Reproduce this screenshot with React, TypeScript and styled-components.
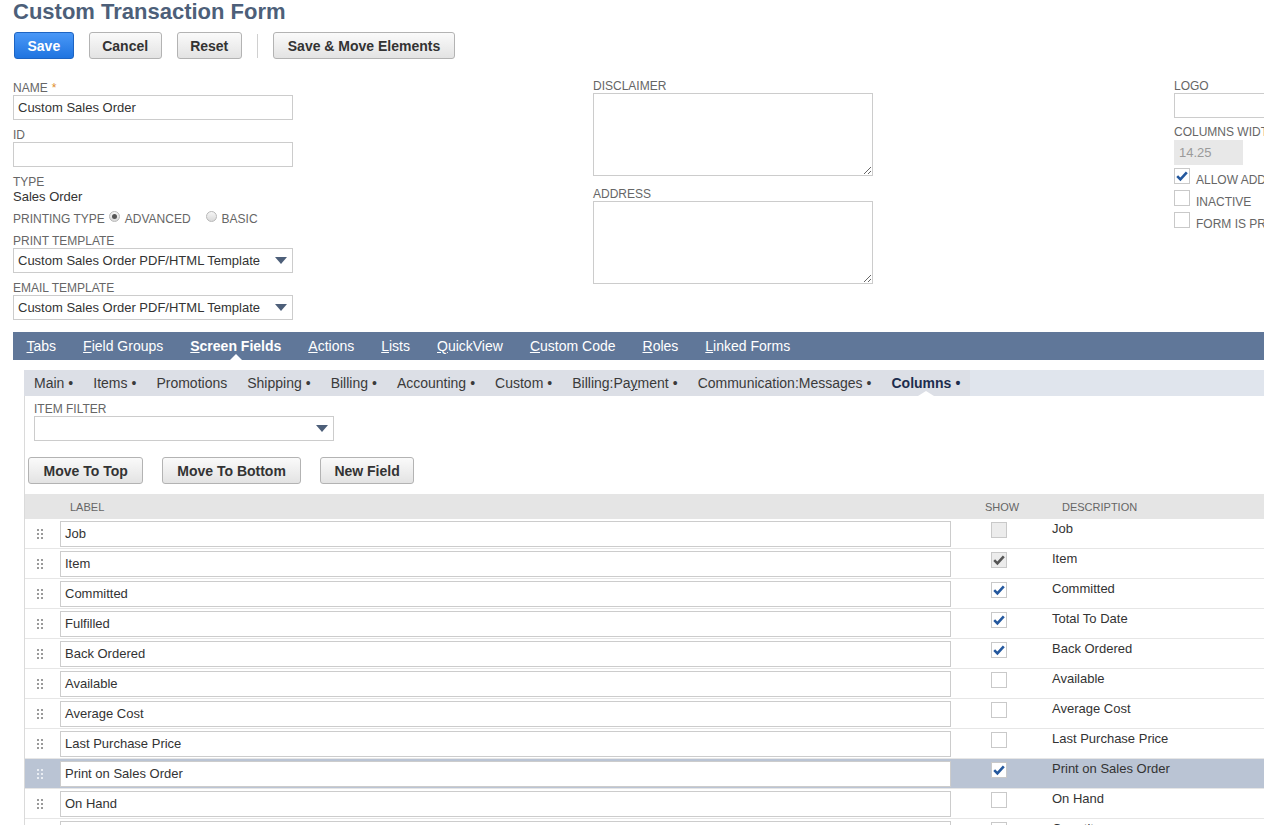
import React from 'react';
import styled, { createGlobalStyle, css } from 'styled-components';

const Global = createGlobalStyle`
  html, body { margin: 0; padding: 0; overflow: hidden; background: #fff; }
  body { font-family: "Liberation Sans", Arial, sans-serif; color: #333; }
  * { box-sizing: border-box; }
`;

const Page = styled.div`
  width: 1264px;
  height: 825px;
  overflow: hidden;
  padding-left: 13px;
`;

const Title = styled.h1`
  margin: 0;
  font-size: 22px;
  line-height: 24px;
  font-weight: bold;
  color: #4d5f79;
`;

const Toolbar = styled.div`
  display: flex;
  align-items: center;
  gap: 15px;
  margin-top: 8px;
  padding-left: 1px;
`;

const Button = styled.button<{ $primary?: boolean; $pad?: number }>`
  height: 27px;
  padding: 0 ${(p) => p.$pad ?? 12.5}px;
  border: 1px solid #b3b3b3;
  border-radius: 3px;
  background: linear-gradient(#fafafa, #e3e3e3);
  font-family: "Liberation Sans", Arial, sans-serif;
  font-weight: bold;
  font-size: 14px;
  color: #333;
  white-space: nowrap;
  ${(p) =>
    p.$primary &&
    css`
      background: linear-gradient(#4a98f7, #1f74e0);
      border-color: #1d64c2;
      color: #fff;
    `}
`;

const Separator = styled.span`
  width: 1px;
  height: 24px;
  background: #d0d0d0;
`;

const FormGrid = styled.div`
  display: grid;
  grid-template-columns: 580px 581px 1fr;
  margin-top: 19px;
`;

const Column = styled.div<{ $top?: number }>`
  display: flex;
  flex-direction: column;
  padding-top: ${(p) => p.$top ?? 0}px;
  min-width: 0;
`;

const Field = styled.div<{ $gap?: number }>`
  margin-bottom: ${(p) => p.$gap ?? 7}px;
`;

const Label = styled.div`
  font-size: 12px;
  line-height: 16px;
  height: 15px;
  color: #666;
  text-transform: uppercase;
  white-space: nowrap;
`;

const Required = styled.span`
  color: #e0902e;
  margin-left: 4px;
`;

const TextInput = styled.div<{ $w?: number; $disabled?: boolean; $mt?: number }>`
  width: ${(p) => p.$w ?? 280}px;
  height: 25px;
  margin-top: ${(p) => p.$mt ?? 0}px;
  border: 1px solid #cccccc;
  padding: 0 4px;
  font-size: 13px;
  line-height: 23px;
  color: #333;
  background: #fff;
  white-space: nowrap;
  ${(p) =>
    p.$disabled &&
    css`
      background: #e8e8e8;
      border-color: #e8e8e8;
      color: #9a9a9a;
    `}
`;

const Value = styled.div`
  font-size: 13px;
  line-height: 15px;
  color: #333;
`;

const RadioRow = styled.div`
  display: flex;
  align-items: center;
  height: 14px;
  font-size: 12px;
  color: #666;
  text-transform: uppercase;
  white-space: nowrap;
`;

const Radio = styled.span<{ $checked?: boolean }>`
  width: 11px;
  height: 11px;
  border-radius: 50%;
  border: 1px solid #b8b8b8;
  background: linear-gradient(#f6f6f6, #d9d9d9);
  margin: 0 5px 6px 4px;
  display: inline-flex;
  align-items: center;
  justify-content: center;
  &::after {
    content: '';
    width: 5px;
    height: 5px;
    border-radius: 50%;
    background: ${(p) => (p.$checked ? '#555' : 'transparent')};
  }
`;

const RadioText = styled.span<{ $gap?: number }>`
  margin-right: ${(p) => p.$gap ?? 0}px;
`;

const Select = styled.div<{ $w?: number }>`
  width: ${(p) => p.$w ?? 280}px;
  height: 25px;
  border: 1px solid #cccccc;
  display: flex;
  align-items: center;
  justify-content: space-between;
  padding: 0 5px 0 4px;
  font-size: 13px;
  color: #333;
  background: #fff;
  white-space: nowrap;
`;

const Caret = styled.span`
  width: 0;
  height: 0;
  border-left: 6px solid transparent;
  border-right: 6px solid transparent;
  border-top: 7px solid #4d5f79;
`;

const TextArea = styled.textarea`
  display: block;
  width: 280px;
  height: 83px;
  margin: 0;
  border: 1px solid #cccccc;
  resize: both;
  font-family: "Liberation Sans", Arial, sans-serif;
  font-size: 13px;
  outline: none;
`;

const CheckRow = styled.div`
  display: flex;
  align-items: flex-start;
  height: 22px;
  gap: 6px;
`;

const CheckLabel = styled.span`
  font-size: 12px;
  line-height: 14px;
  padding-top: 5px;
  color: #666;
  text-transform: uppercase;
  white-space: nowrap;
`;

const Box = styled.span<{ $disabled?: boolean }>`
  width: 16px;
  height: 16px;
  flex: none;
  border: 1px solid #c9c9c9;
  background: ${(p) => (p.$disabled ? '#ececec' : '#fff')};
  display: inline-flex;
  align-items: center;
  justify-content: center;
`;

const CheckBox: React.FC<{ checked?: boolean; disabled?: boolean }> = ({ checked, disabled }) => (
  <Box $disabled={disabled}>
    {checked && (
      <svg width="14" height="14" viewBox="0 0 14 14">
        <path
          d="M2.2 7.2 L5.4 10.4 L11.8 3.4"
          fill="none"
          stroke={disabled ? '#555' : '#24589e'}
          strokeWidth="2.6"
        />
      </svg>
    )}
  </Box>
);

const TabBar = styled.nav`
  margin-top: 12px;
  height: 28px;
  background: #607799;
  display: flex;
`;

const Tab = styled.div<{ $active?: boolean }>`
  position: relative;
  padding: 0 13.5px;
  line-height: 28px;
  font-size: 14px;
  color: #fff;
  white-space: nowrap;
  font-weight: ${(p) => (p.$active ? 'bold' : 'normal')};
  ${(p) =>
    p.$active &&
    css`
      &::after {
        content: '';
        position: absolute;
        left: 50%;
        bottom: 0;
        margin-left: -6px;
        border-left: 6px solid transparent;
        border-right: 6px solid transparent;
        border-bottom: 6px solid #fff;
      }
    `}
`;

const Key = styled.u`
  text-decoration: underline;
`;

const Section = styled.div`
  margin-top: 10px;
  margin-left: 11px;
`;

const SubBar = styled.div`
  height: 26px;
  background: #e0e5ed;
  display: flex;
`;

const SubTabs = styled.div`
  display: flex;
  background: #dcdfe6;
`;

const SubTab = styled.div<{ $active?: boolean }>`
  position: relative;
  padding: 0 10px;
  line-height: 26px;
  font-size: 14px;
  white-space: nowrap;
  color: ${(p) => (p.$active ? '#1d2d4e' : '#3a3a3a')};
  font-weight: ${(p) => (p.$active ? 'bold' : 'normal')};
  ${(p) =>
    p.$active &&
    css`
      &::after {
        content: '';
        position: absolute;
        left: 50%;
        bottom: 0;
        margin-left: -8px;
        border-left: 8px solid transparent;
        border-right: 8px solid transparent;
        border-bottom: 5px solid #fff;
      }
    `}
`;

const Dot = styled.span`
  margin-left: 4px;
`;

const Panel = styled.div`
  border-left: 1px solid #dadada;
  padding-top: 5px;
  height: 600px;
`;

const FilterBlock = styled.div`
  padding-left: 9px;
`;

const ButtonsRow = styled.div`
  display: flex;
  gap: 19px;
  margin-top: 16px;
  padding-left: 3px;
`;

const Table = styled.div`
  margin-top: 10px;
`;

const gridCols = '35px 891px 40px 16px 45px 1fr';

const HeadRow = styled.div`
  display: grid;
  grid-template-columns: ${gridCols};
  height: 25px;
  align-items: center;
  background: #e5e5e5;
  font-size: 11px;
  color: #666;
  text-transform: uppercase;
`;

const HeadCell = styled.div<{ $pad?: number; $span?: string }>`
  padding-left: ${(p) => p.$pad ?? 0}px;
  grid-column: ${(p) => p.$span ?? 'auto'};
  white-space: nowrap;
`;

const Row = styled.div<{ $selected?: boolean }>`
  display: grid;
  grid-template-columns: ${gridCols};
  height: 30px;
  align-items: start;
  border-bottom: 1px solid #e6e6e6;
  background: ${(p) => (p.$selected ? '#bac4d4' : '#fff')};
`;

const HandleCell = styled.div`
  align-self: center;
  padding-left: 12px;
  display: flex;
`;

const LabelInput = styled.div`
  margin-top: 2px;
  height: 26px;
  border: 1px solid #cccccc;
  background: #fff;
  padding-left: 4px;
  font-size: 13px;
  line-height: 24px;
  color: #333;
  white-space: nowrap;
`;

const ShowCell = styled.div`
  grid-column: 4;
  margin-top: 3px;
  display: flex;
`;

const Desc = styled.div`
  grid-column: 6;
  margin-top: 2px;
  font-size: 13px;
  line-height: 16px;
  color: #333;
  white-space: nowrap;
`;

const Handle: React.FC<{ light?: boolean }> = ({ light }) => (
  <svg width="6" height="10" viewBox="0 0 6 10">
    {[0, 4, 8].map((y) =>
      [0, 4].map((x) => (
        <rect key={`${x}-${y}`} x={x} y={y} width="2" height="2" fill={light ? '#e9edf3' : '#9a9a9a'} />
      ))
    )}
  </svg>
);

type RowData = { label: string; desc: string; checked?: boolean; disabled?: boolean; selected?: boolean };

const rows: RowData[] = [
  { label: 'Job', desc: 'Job', disabled: true },
  { label: 'Item', desc: 'Item', disabled: true, checked: true },
  { label: 'Committed', desc: 'Committed', checked: true },
  { label: 'Fulfilled', desc: 'Total To Date', checked: true },
  { label: 'Back Ordered', desc: 'Back Ordered', checked: true },
  { label: 'Available', desc: 'Available' },
  { label: 'Average Cost', desc: 'Average Cost' },
  { label: 'Last Purchase Price', desc: 'Last Purchase Price' },
  { label: 'Print on Sales Order', desc: 'Print on Sales Order', checked: true, selected: true },
  { label: 'On Hand', desc: 'On Hand' },
  { label: 'Quantity', desc: 'Quantity' },
];

const tabs: { key: string; post: string; active?: boolean }[] = [
  { key: 'T', post: 'abs' },
  { key: 'F', post: 'ield Groups' },
  { key: 'S', post: 'creen Fields', active: true },
  { key: 'A', post: 'ctions' },
  { key: 'L', post: 'ists' },
  { key: 'Q', post: 'uickView' },
  { key: 'C', post: 'ustom Code' },
  { key: 'R', post: 'oles' },
  { key: 'L', post: 'inked Forms' },
];

const subTabs: { pre: string; key?: string; post?: string; dot: boolean; active?: boolean }[] = [
  { pre: 'Main', dot: true },
  { pre: 'Items', dot: true },
  { pre: 'Promotions', dot: false },
  { pre: 'Shippin', key: 'g', post: '', dot: true },
  { pre: 'Billing', dot: true },
  { pre: 'Accounting', dot: true },
  { pre: 'Custom', dot: true },
  { pre: 'Billing:Pa', key: 'y', post: 'ment', dot: true },
  { pre: 'Communication:Messages', dot: true },
  { pre: 'Columns', dot: true, active: true },
];

export default function App() {
  return (
    <Page>
      <Global />
      <Title>Custom Transaction Form</Title>
      <Toolbar>
        <Button $primary>Save</Button>
        <Button>Cancel</Button>
        <Button>Reset</Button>
        <Separator />
        <Button $pad={14}>Save &amp; Move Elements</Button>
      </Toolbar>

      <FormGrid>
        <Column $top={2}>
          <Field>
            <Label>
              Name<Required>*</Required>
            </Label>
            <TextInput>Custom Sales Order</TextInput>
          </Field>
          <Field>
            <Label>ID</Label>
            <TextInput />
          </Field>
          <Field $gap={8}>
            <Label>Type</Label>
            <Value>Sales Order</Value>
          </Field>
          <Field>
            <RadioRow>
              <span>Printing Type</span>
              <Radio $checked />
              <RadioText $gap={11}>Advanced</RadioText>
              <Radio />
              <RadioText>Basic</RadioText>
            </RadioRow>
          </Field>
          <Field>
            <Label>Print Template</Label>
            <Select>
              <span>Custom Sales Order PDF/HTML Template</span>
              <Caret />
            </Select>
          </Field>
          <Field $gap={0}>
            <Label>Email Template</Label>
            <Select>
              <span>Custom Sales Order PDF/HTML Template</span>
              <Caret />
            </Select>
          </Field>
        </Column>

        <Column>
          <Field $gap={10}>
            <Label>Disclaimer</Label>
            <TextArea />
          </Field>
          <Field $gap={0}>
            <Label>Address</Label>
            <TextArea />
          </Field>
        </Column>

        <Column>
          <Field $gap={6}>
            <Label>Logo</Label>
            <TextInput $w={300} />
          </Field>
          <Field $gap={3}>
            <Label>Columns Width</Label>
            <TextInput $w={69} $disabled $mt={1}>
              14.25
            </TextInput>
          </Field>
          <CheckRow>
            <CheckBox checked />
            <CheckLabel>Allow Add Items</CheckLabel>
          </CheckRow>
          <CheckRow>
            <CheckBox />
            <CheckLabel>Inactive</CheckLabel>
          </CheckRow>
          <CheckRow>
            <CheckBox />
            <CheckLabel>Form Is Preferred</CheckLabel>
          </CheckRow>
        </Column>
      </FormGrid>

      <TabBar>
        {tabs.map((t, i) => (
          <Tab key={i} $active={t.active}>
            <Key>{t.key}</Key>
            {t.post}
          </Tab>
        ))}
      </TabBar>

      <Section>
        <SubBar>
          <SubTabs>
            {subTabs.map((s, i) => (
              <SubTab key={i} $active={s.active}>
                {s.pre}
                {s.key && <Key>{s.key}</Key>}
                {s.post}
                {s.dot && <Dot>•</Dot>}
              </SubTab>
            ))}
          </SubTabs>
        </SubBar>
        <Panel>
          <FilterBlock>
            <Label>Item Filter</Label>
            <Select $w={300}>
              <span />
              <Caret />
            </Select>
          </FilterBlock>
          <ButtonsRow>
            <Button $pad={14.5}>Move To Top</Button>
            <Button $pad={14}>Move To Bottom</Button>
            <Button $pad={13.5}>New Field</Button>
          </ButtonsRow>
          <Table>
            <HeadRow>
              <HeadCell $span="2" $pad={10}>
                Label
              </HeadCell>
              <HeadCell $span="3 / 6" $pad={34}>
                Show
              </HeadCell>
              <HeadCell $span="6" $pad={10}>
                Description
              </HeadCell>
            </HeadRow>
            {rows.map((r, i) => (
              <Row key={i} $selected={r.selected}>
                <HandleCell>
                  <Handle light={r.selected} />
                </HandleCell>
                <LabelInput>{r.label}</LabelInput>
                <ShowCell>
                  <CheckBox checked={r.checked} disabled={r.disabled} />
                </ShowCell>
                <Desc>{r.desc}</Desc>
              </Row>
            ))}
          </Table>
        </Panel>
      </Section>
    </Page>
  );
}
